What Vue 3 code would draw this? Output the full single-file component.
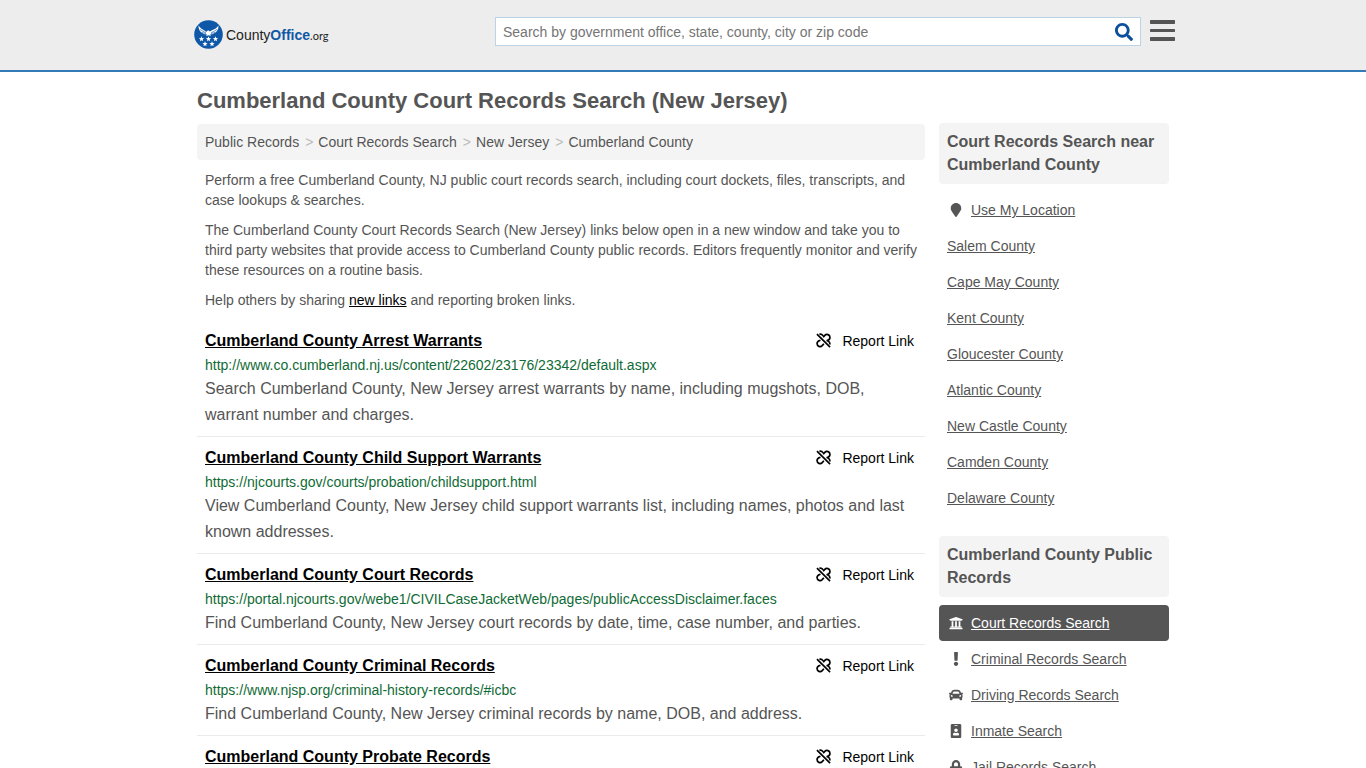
<script setup>
const crumbs = ['Public Records', 'Court Records Search', 'New Jersey', 'Cumberland County']

const records = [
  { title: 'Cumberland County Arrest Warrants', url: 'http://www.co.cumberland.nj.us/content/22602/23176/23342/default.aspx', text: 'Search Cumberland County, New Jersey arrest warrants by name, including mugshots, DOB, warrant number and charges.' },
  { title: 'Cumberland County Child Support Warrants', url: 'https://njcourts.gov/courts/probation/childsupport.html', text: 'View Cumberland County, New Jersey child support warrants list, including names, photos and last known addresses.' },
  { title: 'Cumberland County Court Records', url: 'https://portal.njcourts.gov/webe1/CIVILCaseJacketWeb/pages/publicAccessDisclaimer.faces', text: 'Find Cumberland County, New Jersey court records by date, time, case number, and parties.' },
  { title: 'Cumberland County Criminal Records', url: 'https://www.njsp.org/criminal-history-records/#icbc', text: 'Find Cumberland County, New Jersey criminal records by name, DOB, and address.' },
  { title: 'Cumberland County Probate Records', url: '', text: '' }
]

const counties = ['Salem County', 'Cape May County', 'Kent County', 'Gloucester County', 'Atlantic County', 'New Castle County', 'Camden County', 'Delaware County']

const marker = 'M172.268 501.67C26.97 291.031 0 269.413 0 192 0 85.961 85.961 0 192 0s192 85.961 192 192c0 77.413-26.97 99.031-172.268 309.67-9.535 13.774-29.93 13.773-39.464 0z'

const publicRecords = [
  { label: 'Court Records Search', active: true, box: '0 0 512 512', path: 'M496 128v16a8 8 0 0 1-8 8h-24v12c0 6.627-5.373 12-12 12H60c-6.627 0-12-5.373-12-12v-12H24a8 8 0 0 1-8-8v-16a8 8 0 0 1 4.941-7.392l232-88a7.996 7.996 0 0 1 6.118 0l232 88A8 8 0 0 1 496 128zm-24 304H40c-13.255 0-24 10.745-24 24v16a8 8 0 0 0 8 8h464a8 8 0 0 0 8-8v-16c0-13.255-10.745-24-24-24zM96 192v192H60c-6.627 0-12 5.373-12 12v20h416v-20c0-6.627-5.373-12-12-12h-36V192h-64v192h-64V192h-64v192h-64V192H96z' },
  { label: 'Criminal Records Search', box: '0 0 192 512', path: 'M176 432c0 44.112-35.888 80-80 80s-80-35.888-80-80 35.888-80 80-80 80 35.888 80 80zM25.26 25.199l13.6 272C39.499 309.972 50.041 320 62.83 320h66.34c12.789 0 23.331-10.028 23.97-22.801l13.6-272C167.425 11.49 156.496 0 142.77 0H49.23C35.504 0 24.575 11.49 25.26 25.199z' },
  { label: 'Driving Records Search', box: '0 0 512 512', path: 'M499.99 176h-59.87l-16.64-41.6C406.38 91.63 365.57 64 319.5 64h-127c-46.06 0-86.88 27.63-103.99 70.4L71.87 176H12.01C4.2 176-1.53 183.34.37 190.91l6 24C7.7 220.25 12.5 224 18.01 224h20.07C24.65 235.73 16 252.78 16 272v48c0 16.12 6.16 30.67 16 41.93V416c0 17.67 14.33 32 32 32h32c17.67 0 32-14.33 32-32v-32h256v32c0 17.67 14.33 32 32 32h32c17.67 0 32-14.33 32-32v-54.07c9.84-11.25 16-25.8 16-41.93v-48c0-19.22-8.65-36.27-22.07-48H494c5.51 0 10.31-3.75 11.64-9.09l6-24c1.89-7.57-3.84-14.91-11.65-14.91zm-352.06-17.83c7.29-18.22 24.94-30.17 44.57-30.17h127c19.63 0 37.28 11.95 44.57 30.17L384 208H128l19.93-49.83zM96 319.8c-19.2 0-32-12.76-32-31.9S76.8 256 96 256s48 28.71 48 47.85-28.8 15.95-48 15.95zm320 0c-19.2 0-48 3.19-48-15.95S396.8 256 416 256s32 12.76 32 31.9-12.8 31.9-32 31.9z' },
  { label: 'Inmate Search', box: '0 0 384 512', path: 'M336 0H48C21.5 0 0 21.5 0 48v416c0 26.5 21.5 48 48 48h288c26.5 0 48-21.5 48-48V48c0-26.5-21.5-48-48-48zM144 32h96c8.8 0 16 7.2 16 16s-7.2 16-16 16h-96c-8.8 0-16-7.2-16-16s7.2-16 16-16zm48 128c35.3 0 64 28.7 64 64s-28.7 64-64 64-64-28.7-64-64 28.7-64 64-64zm112 236.8c0 10.6-10 19.2-22.4 19.2H102.4C90 416 80 407.4 80 396.8v-19.2c0-31.8 30.1-57.6 67.2-57.6h5c12.3 5.1 25.7 8 39.8 8s27.6-2.9 39.8-8h5c37.1 0 67.2 25.8 67.2 57.6v19.2z' },
  { label: 'Jail Records Search', box: '0 0 448 512', path: 'M400 224h-24v-72C376 68.2 307.8 0 224 0S72 68.2 72 152v72H48c-26.5 0-48 21.5-48 48v192c0 26.5 21.5 48 48 48h352c26.5 0 48-21.5 48-48V272c0-26.5-21.5-48-48-48zm-104 0H152v-72c0-39.7 32.3-72 72-72s72 32.3 72 72v72z' }
]

const star = 'M0-2.7.7-.9 2.600-.8 1.100.4 1.600 2.300 0 1.200-1.600 2.300-1.100.4-2.600-.8-.7-.9Z'
const stars = [[7.5, 19], [14.5, 19], [21.5, 19], [11, 24], [18, 24]]
</script>

<template>
  <div class="page">
    <header class="top">
      <div class="top-inner">
        <a class="logo" href="#" aria-label="CountyOffice.org">
          <svg class="seal" viewBox="0 0 29 29" aria-hidden="true">
            <circle cx="14.5" cy="14.5" r="14.3" fill="#0f58a8" />
            <path fill="#fff" d="M4.500 5.500C7 9.500 10 9.500 12.300 12L13.200 10.800 14.800 10.400 15.800 11.600C18.500 9.500 22 9.500 24.500 5.500 24.700 9.500 22.500 12.500 19 14L16 14.500 17 16 14.500 15.300 12 16 13 14.500 10 14C6.500 12.500 4.300 9.500 4.500 5.500Z" />
            <path stroke="#0f58a8" stroke-width=".6" fill="none" d="M6 9.500 12 13M8 12.500 12 13.500M23 9.500 17 13M21 12.500 17 13.500" />
            <path v-for="(s, i) in stars" :key="i" fill="#fff" :d="star" :transform="`translate(${s[0]} ${s[1]})`" />
          </svg>
          <span class="brand">County<b>Office</b><i>.org</i></span>
        </a>
        <form class="search" role="search" @submit.prevent>
          <input type="text" aria-label="Search" placeholder="Search by government office, state, county, city or zip code">
          <button type="submit" aria-label="Submit search">
            <svg viewBox="0 0 512 512" aria-hidden="true"><path fill="currentColor" d="M505 442.700L405.300 343c-4.500-4.500-10.600-7-17-7H372c27.600-35.300 44-79.700 44-128C416 93.100 322.900 0 208 0S0 93.100 0 208s93.100 208 208 208c48.300 0 92.700-16.400 128-44v16.300c0 6.400 2.500 12.500 7 17l99.700 99.700c9.400 9.400 24.600 9.400 33.900 0l28.300-28.300c9.400-9.400 9.400-24.600.1-34zM208 336c-70.700 0-128-57.200-128-128 0-70.700 57.200-128 128-128 70.700 0 128 57.200 128 128 0 70.700-57.200 128-128 128z" /></svg>
          </button>
        </form>
        <button class="menu" type="button" aria-label="Menu">
          <svg viewBox="0 0 25 21" aria-hidden="true"><path fill="currentColor" d="M.5 0h24l.5.500v3l-.5.500H.5L0 3.500V.5zM.5 9h24l.5.500v2l-.5.500H.5l-.5-.5v-2zM.5 17h24l.5.500v3l-.5.500H.5l-.5-.5v-3z" /></svg>
        </button>
      </div>
    </header>

    <div class="body">
      <main>
        <h1>Cumberland County Court Records Search (New Jersey)</h1>
        <nav class="crumbs" aria-label="Breadcrumb">
          <template v-for="(c, i) in crumbs" :key="c">
            <span v-if="i" class="sep">&gt;</span><a href="#">{{ c }}</a>
          </template>
        </nav>
        <div class="intro">
          <p>Perform a free Cumberland County, NJ public court records search, including court dockets, files, transcripts, and case lookups &amp; searches.</p>
          <p>The Cumberland County Court Records Search (New Jersey) links below open in a new window and take you to third party websites that provide access to Cumberland County public records. Editors frequently monitor and verify these resources on a routine basis.</p>
          <p>Help others by sharing <a href="#">new links</a> and reporting broken links.</p>
        </div>
        <article v-for="r in records" :key="r.title" class="record">
          <div class="record-head">
            <h2><a href="#">{{ r.title }}</a></h2>
            <a class="report" href="#">
              <svg viewBox="0 0 16 16" aria-hidden="true"><path fill="none" stroke="currentColor" stroke-width="1.800" d="M1 1.300 15 15M7.600 4.600 9.400 2.500C11.200 .6 14.900 1.700 14.900 4.700 14.900 6.400 13.400 7.800 11.200 8.300M8.400 11.400 6.600 13.500C4.800 15.400 1.100 14.300 1.100 11.300 1.100 9.600 2.600 8.200 4.800 7.700M3.600 1.400C5 1 6.500 1.600 7.600 3M12.400 8.200C14.200 9 15 10.500 14.900 12.200" /></svg>
              <span>Report Link</span>
            </a>
          </div>
          <div v-if="r.url" class="url">{{ r.url }}</div>
          <p v-if="r.text" class="desc">{{ r.text }}</p>
        </article>
      </main>

      <aside>
        <section>
          <h3>Court Records Search near Cumberland County</h3>
          <ul>
            <li><a href="#"><svg class="icon" viewBox="0 0 384 512" aria-hidden="true"><path fill="currentColor" :d="marker" /></svg><span>Use My Location</span></a></li>
            <li v-for="c in counties" :key="c"><a href="#"><span>{{ c }}</span></a></li>
          </ul>
        </section>
        <section>
          <h3>Cumberland County Public Records</h3>
          <ul>
            <li v-for="p in publicRecords" :key="p.label">
              <a href="#" :class="{ active: p.active }"><svg class="icon" :viewBox="p.box" aria-hidden="true"><path fill="currentColor" :d="p.path" /></svg><span>{{ p.label }}</span></a>
            </li>
          </ul>
        </section>
      </aside>
    </div>
  </div>
</template>

<style>
html, body { margin: 0; background: #fff; }
body { height: 100vh; overflow: hidden; }
</style>

<style scoped>
.page { font-family: "Liberation Sans", Arial, sans-serif; font-size: 14px; line-height: 20px; color: #555; }
h1, h2, h3, p, ul { margin: 0; padding: 0; }
a { color: inherit; }
button { border: 0; padding: 0; background: none; cursor: pointer; }
svg { display: block; flex: none; }

.top { background: #ededed; border-bottom: 2px solid #337ab7; }
.top-inner { max-width: 984px; height: 70px; margin: 0 auto; padding-left: 3px; box-sizing: border-box; display: flex; align-items: flex-start; }
.logo { display: flex; align-items: center; gap: 3px; margin-top: 20px; text-decoration: none; flex: 1; }
.seal { width: 29px; height: 29px; }
.brand { font-size: 14px; color: #222; padding-top: 2px; }
.brand b { color: #0f58a8; }
.brand i { font-family: Lato, sans-serif; font-size: 11px; font-style: normal; }
.search { width: 646px; height: 29px; margin-top: 17px; box-sizing: border-box; display: flex; background: #fff; border: 1px solid #bcd3e6; }
.search input { flex: 1; min-width: 0; border: 0; outline: 0; padding: 0 7px; background: none; font: inherit; color: #555; }
.search input::placeholder { color: #757575; opacity: 1; }
.search button { width: 32px; display: flex; align-items: center; justify-content: center; color: #0b509c; }
.search button svg { width: 18px; height: 18px; }
.menu { margin: 20px 0 0 9px; color: #555; }
.menu svg { width: 25px; height: 21px; }

.body { max-width: 972px; margin: 0 auto; display: flex; gap: 14px; }
main { flex: 1; min-width: 0; }
h1 { font-size: 22px; line-height: 28px; padding: 15px 0 9px; }
.crumbs { display: flex; flex-wrap: wrap; background: #f4f4f4; border-radius: 4px; padding: 8px; }
.crumbs a { text-decoration: none; }
.sep { color: #bbb; padding: 0 5px 0 6px; }
.intro { padding: 10px 8px; display: grid; gap: 10px; }
.intro a { color: #000; }

.record { padding: 8px; border-bottom: 1px solid #eaeaea; }
.record-head { display: flex; justify-content: space-between; color: #000; padding-right: 3px; }
h2 { font-size: 16px; line-height: 25px; }
.report { display: flex; align-items: center; gap: 11px; text-decoration: none; line-height: 26px; height: 25px; }
.report svg { width: 15px; height: 15px; }
.url { line-height: 21px; padding-top: 2px; color: #0f6b35; }
.desc { font-size: 16px; line-height: 26px; max-width: 710px; }

aside { width: 230px; padding-top: 51px; }
section { margin-bottom: 20px; }
h3 { font-size: 16px; line-height: 23px; padding: 7px 8px 8px; margin-bottom: 8px; background: #f4f4f4; border-radius: 4px; }
ul { list-style: none; }
li a { display: flex; align-items: center; gap: 6px; padding: 8px; border-radius: 4px; text-decoration: none; }
li span { text-decoration: underline; }
.icon { width: 18px; height: 14px; }
.active { background: #555; color: #fff; }
</style>
